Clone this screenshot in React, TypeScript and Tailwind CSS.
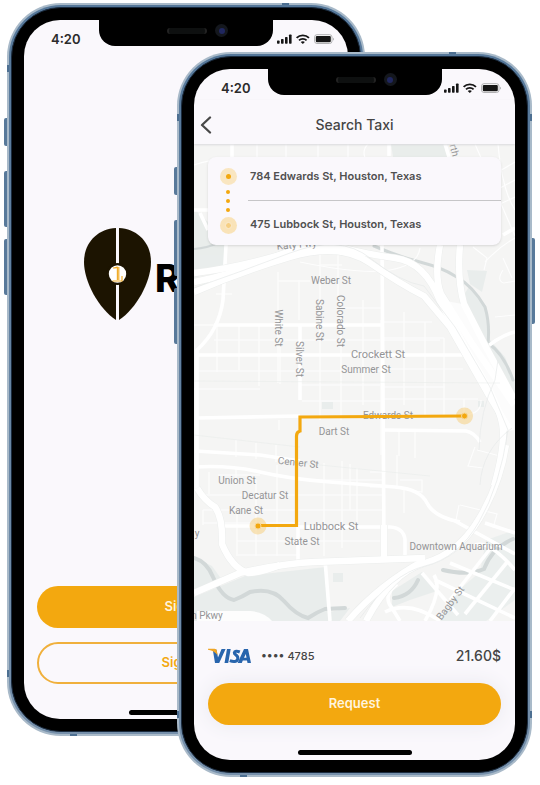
import type { ReactNode } from "react";

function StatusIcons() {
  return (
    <svg viewBox="0 0 58 12" className="h-3 w-[58px]" fill="#161616" role="img" aria-label="Signal, Wi-Fi and battery">
      <rect x="0" y="7.6" width="2.6" height="3.2" rx="0.7" />
      <rect x="4" y="6" width="2.6" height="4.8" rx="0.7" />
      <rect x="8" y="4" width="2.6" height="6.8" rx="0.7" />
      <rect x="12" y="1.6" width="2.6" height="9.2" rx="0.7" />
      <g fill="none" stroke="#161616" strokeWidth="1.8">
        <path d="M19.6 4.9 C23 1.6 28.6 1.6 32 4.9" />
        <path d="M22 7.3 C24 5.3 27.6 5.3 29.6 7.3" />
      </g>
      <path d="M25.8 11 L23.7 8.9 C24.8 8 26.8 8 27.9 8.9 Z" />
      <rect x="37.6" y="1.7" width="17.4" height="8.8" rx="2.4" fill="#fff" stroke="#a8a8aa" strokeWidth="0.9" />
      <rect x="38.8" y="2.9" width="15" height="6.4" rx="1.2" />
      <path d="M56.1 4.7 C57.3 5 57.3 7.2 56.1 7.5 Z" fill="#a8a8aa" />
    </svg>
  );
}

function StatusBar() {
  return (
    <div className="grid h-[31px] grid-cols-[1fr_174px_1fr] items-start">
      <span className="pt-[9px] pl-[27px] text-[13px] leading-5 font-semibold text-[#2b2b2b]">4:20</span>
      <div className="flex h-[26px] items-center justify-end gap-2 rounded-b-2xl bg-black pr-[45px] pb-[5px]">
        <div className="h-[6px] w-10 rounded-full border-x-2 border-[#222] bg-[#0e1010]" />
        <div className="flex size-[13px] items-center justify-center rounded-full bg-[#14171d]">
          <div className="size-[6px] rounded-full bg-[#20275f]" />
        </div>
      </div>
      <div className="flex justify-end pt-[13px] pr-[13px]">
        <StatusIcons />
      </div>
    </div>
  );
}

const side = "absolute w-[3px] bg-[#58799a]";
const mark = "absolute bg-[#4d6f91]";

function Phone({ className, label, children }: { className: string; label: string; children: ReactNode }) {
  return (
    <section aria-label={label} className={`relative rounded-[54px] bg-[#a9bac9] p-[2px] ${className}`}>
      <div className={`${side} top-[115px] -left-[3px] h-7 rounded-l-xs`} />
      <div className={`${side} top-[168px] -left-[3px] h-14 rounded-l-xs`} />
      <div className={`${side} top-[236px] -left-[3px] h-14 rounded-l-xs`} />
      <div className={`${side} top-[186px] -right-[3px] h-[86px] rounded-r-xs`} />
      <div className={`${mark} top-[62px] left-0 h-[7px] w-1`} />
      <div className={`${mark} top-[62px] right-0 h-[7px] w-1`} />
      <div className={`${mark} bottom-[59px] left-0 h-[7px] w-1`} />
      <div className={`${mark} right-0 bottom-[59px] h-[7px] w-1`} />
      <div className={`${mark} top-0 right-[76px] h-1 w-[7px]`} />
      <div className={`${mark} bottom-0 left-[63px] h-1 w-[7px]`} />
      <div className="relative rounded-[52px] bg-linear-to-b from-[#56789a] to-[#7690ab] p-[2px]">
        <div className="rounded-[50px] border border-[#1b2c40] bg-black p-3">
          <div className="overflow-hidden rounded-[36px] bg-[#faf8fc]">{children}</div>
        </div>
      </div>
    </section>
  );
}

function HomeBar() {
  return <div className="mx-auto h-[5px] w-[114px] rounded-full bg-black" />;
}

function PinLogo() {
  return (
    <svg viewBox="84 228 67 92" className="h-[92px] w-[67px]" aria-hidden="true">
      <path d="M116 228 C97 229 84 243 84 262 C84 282 99 309 116 320 Z" fill="#1c1401" />
      <path d="M119 228 C138 229 151 243 151 262 C151 282 136 309 119 320 Z" fill="#1c1401" />
      <circle cx="117.5" cy="274" r="11" fill="#1c1401" />
      <circle cx="117.5" cy="274" r="8.7" fill="#fff" />
      <path d="M113 268 Q117 268 117.4 266.8 V280 M112.5 281 H122 V276 M118.8 267 V280" fill="none" stroke="#f0ad2b" strokeWidth="1.2" />
    </svg>
  );
}

function VisaLogo() {
  return (
    <svg viewBox="0 0 43 16" className="h-4 w-[43px]" role="img" aria-label="Visa">
      <path d="M5 3 L8.4 1.5 L10 9.5 L13.6 1 H17.6 L11.2 15 H7 Z" fill="#2865ad" />
      <path d="M0 0.8 H6.4 C8.3 0.8 8.8 1.8 9.2 4.5 L9.6 7.5 C8 4.5 4.5 2.6 0 1.7 Z" fill="#efa525" />
      <path d="M19 1 H22.7 L20.2 15 H16.5 Z" fill="#2865ad" />
      <path d="M31.8 4 C29 2.800 26.6 2.900 26.3 4.700 C26.2 6.8 30.5 7 29.8 10.8 C29.2 14 25.5 14.2 21.8 12.700" fill="none" stroke="#2865ad" strokeWidth="3" />
      <path fillRule="evenodd" d="M29.6 15 L36 1 H40 L43 15 H39.5 L39 12.5 H34.8 L33.8 15 Z M36 9.8 H38.5 L37.8 6 Z" fill="#2865ad" />
    </svg>
  );
}

const minorRoads = [
  "M194 165 Q214 158 232 160", "M232 144 V160", "M257 144 V158", "M286 144 V158", "M318 144 V158", "M348 144 V158", "M365 158 Q362 150 368 144",
  "M475 144 L515 236", "M498 144 Q502 190 515 210", "M498 172 L515 162", "M500 188 L515 180", "M500 204 L515 197",
  "M320 252 V300", "M338 254 V300", "M320 265 H342", "M278 272 V383", "M299 280 V320", "M278 281 H310", "M216 294 H232", "M194 325 H218",
  "M320 300 V420", "M341 300 V420", "M363 300 V405", "M340 308 H381", "M340 325 H381", "M214 340 H440", "M217 326 V372", "M239 326 V370", "M259 326 V386", "M280 326 V384",
  "M197 371 H380", "M194 389 H260", "M300 385 H380", "M302 401 H381", "M381 320 V455", "M404 312 V405", "M425 322 V415", "M444 338 V415",
  "M384 322 H432", "M384 338 H444", "M384 369 H463", "M384 387 H445", "M384 399 H478", "M464 399 V415", "M464 415 Q482 414 481 400",
  "M279 420 V430", "M236 440 V457", "M256 443 V459", "M276 445 V462", "M399 431 V456", "M415 431 V458", "M236 469 V485",
  "M209 472 V494", "M218 475 H260", "M198 495 H300", "M203 510 H382", "M203 523 H300", "M237 541 H382", "M238 555 H300",
  "M203 510 V525", "M237 510 V556", "M256 480 V556", "M277 465 V556", "M324 463 V556", "M342 461 V548", "M357 468 V530", "M350 464 V510",
  "M300 480 H382", "M300 495 H382", "M386 472 H370 M370 487 H384", "M397 455 V488 L422 492 V480 H400", "M404 487 V513",
  "M475 447 L468 466 L483 468 M477 450 L500 456", "M460 505 L497 514 L493 528", "M459 505 L456 520",
  "M503 270 Q496 281 504 283 L515 281", "M485 262 Q500 246 515 238", "M473 247 L487 258 L484 270", "M503 258 L512 278", "M495 317 L515 315",
  "M420 248 Q418 265 390 270 T300 262",
];

const streets = [
  "M226 245 L223 300 Q219 330 197 350 V490", "M214 325 H382", "M198 355 H475", "M300 325 V400", "M198 418 L300 416",
  "M382 245 L384 545", "M195 451 L260 455 L300 461", "M195 467 Q230 465 260 472 T330 482 T395 487 T427 503 T460 522",
  "M384 430 L466 431 Q475 433 480 442", "M221 526 H262", "M298 525 V560", "M300 527 H390 Q404 528 405 540 V562", "M325 560 L330 621",
  "M194 210 H210", "M200 213 L208 230", "M481 352 Q500 335 515 332", "M485 523 L515 533", "M455 521 L515 554",
  "M422 573 L458 615", "M435 580 L515 618", "M450 563 L515 590", "M450 600 L490 549", "M465 614 L508 561", "M490 621 L515 588",
  "M475 545 Q489 540 515 570", "M397 584 Q382 596 392 608 L400 621", "M385 612 Q410 600 440 621",
  "M232 144 V160", "M389 144 V156", "M445 144 L449 157", "M503 235 L515 228", "M434 575 Q443 590 425 621",
];

const highways = [
  "M194 282 Q235 274 275 257 T340 247 T395 258 T440 301 L474 363 Q502 409 503 430 T494 486",
  "M194 292 Q240 272 290 257 T370 263 T424 296 L450 327 L487 392 L510 430",
  "M194 273 Q245 267 310 246",
  "M440 245 Q434 277 441 294 L471 342 L514 405",
  "M460 245 Q457 279 464 304 L487 349 L514 399",
  "M506 445 Q500 484 479 519 T425 563 T366 621",
  "M194 593 L240 573 Q285 563 315 562 L425 558",
  "M425 560 Q380 584 348 621",
  "M197 488 Q204 500 215 507 Q223 518 222 544 Q232 568 248 573 Q260 573 280 565",
  "M384 525 V560",
];

type MapLabel = { text: string; x: number; y: number; big?: boolean; turn?: number };

const labels: MapLabel[] = [
  { text: "Weber St", x: 331, y: 284 },
  { text: "Crockett St", x: 378, y: 358, big: true },
  { text: "Summer St", x: 366, y: 373 },
  { text: "Edwards St", x: 388, y: 419 },
  { text: "Dart St", x: 334, y: 435 },
  { text: "Center St", x: 298, y: 466, turn: 6 },
  { text: "Union St", x: 237, y: 484 },
  { text: "Decatur St", x: 265, y: 499 },
  { text: "Kane St", x: 246, y: 514 },
  { text: "Lubbock St", x: 331, y: 530, big: true },
  { text: "State St", x: 302, y: 545 },
  { text: "Downtown Aquarium", x: 456, y: 550 },
  { text: "n Pkwy", x: 207, y: 619 },
  { text: "y", x: 197, y: 537 },
  { text: "Bagby St", x: 453, y: 605, turn: -53 },
  { text: "White St", x: 275, y: 328, turn: 90 },
  { text: "Silver St", x: 296, y: 359, turn: 90 },
  { text: "Sabine St", x: 316, y: 320, turn: 90 },
  { text: "Colorado St", x: 337, y: 321, turn: 90 },
  { text: "rth", x: 451, y: 151, turn: 75 },
  { text: "Katy Fwy", x: 297, y: 248, turn: -5 },
];

function CityMap() {
  return (
    <svg
      viewBox="194 144 321 477"
      preserveAspectRatio="xMidYMid slice"
      className="h-[477px] w-full [grid-area:1/1]"
      role="img"
      aria-label="Route from Edwards St to Lubbock St"
    >
      <rect x="0" y="0" width="900" height="900" fill="#f5f5f4" />
      <g fill="#e9edec">
        <path d="M391 144 H445 L449 157 H393 Z" />
        <path d="M194 209 L208 222 L226 245 L224 268 L194 278 Z" />
        <path d="M470 285 L486 306 L490 340 L505 357 L515 382 V400 L478 340 L462 298 Z" />
        <path d="M467 270 L487 271 L482 292 L470 284 Z" />
        <path d="M322 402 H333 V409 H322 Z M478 401 H484 V407 H478 Z M333 573 H343 V582 H333 Z" />
        <path d="M194 557 L212 566 L222 580 L194 592 Z" />
        <path d="M194 597 L245 576 L326 567 L329 612 L350 608 L340 621 H194 Z" />
        <path d="M392 591 L422 572 L440 590 L410 600 L392 607 Z" />
        <path d="M486 540 L515 530 V600 L486 621 H440 L452 596 L480 572 Z" opacity="0.8" />
      </g>
      <g fill="none" stroke="#d2d8d8" strokeLinecap="round">
        <path strokeWidth="3" d="M374 246 Q397 256 420 262 T455 276 Q473 286 485 307 Q490 324 488 343 Q504 354 513 380" />
        <path strokeWidth="4" d="M194 558 Q207 562 213 577 Q222 598 234 600 Q242 597 250 592 Q272 587 284 601 T308 618 Q317 612 325 609 L345 608" />
        <path strokeWidth="4" d="M394 598 Q411 596 418 580 M443 570 Q468 576 484 569 Q492 548 513 539" />
        <path strokeWidth="2" d="M194 249 Q208 248 220 242" />
      </g>
      <g fill="none" stroke="#fff" strokeWidth="1.2" opacity="0.85">
        {minorRoads.map((d, i) => <path key={i} d={d} />)}
      </g>
      <g fill="none" stroke="#fff" strokeWidth="3.6" strokeLinejoin="round">
        {streets.map((d, i) => <path key={i} d={d} />)}
      </g>
      <g fill="none" stroke="#eceeed" strokeWidth="7.4" strokeLinejoin="round">
        {highways.map((d, i) => <path key={i} d={d} />)}
      </g>
      <path d="M441 300 L462 304 L486 349 L514 400 V430 L504 432 Q500 405 474 363 Z" fill="#fcfcfc" />
      <g fill="none" stroke="#fff" strokeWidth="6.4" strokeLinejoin="round">
        {highways.map((d, i) => <path key={i} d={d} />)}
      </g>
      <g fill="none" stroke="#e6eae9" strokeWidth="0.7">
        <path d="M194 288 Q240 272 290 253 T370 258 T424 286 L455 327 L490 387 L508 430" />
        <path d="M508 430 Q500 486 479 522 T425 566 T360 618" />
        <path d="M479 450 Q480 410 495 380 L498 360 M480 485 Q482 450 512 428" />
        <path d="M194 435 L300 447 M300 463 L430 476 M194 381 L500 383" opacity="0.7" />
      </g>
      <path d="M197 611 H250 Q264 612 272 621 H197 Z" fill="#fdfdfd" />
      <g fill="#949496" textAnchor="middle" className="font-['Roboto',sans-serif] text-[10px]">
        {labels.map((l) => (
          <text
            key={l.text}
            x={l.x}
            y={l.y}
            className={l.big ? "text-[11px]" : undefined}
            transform={l.turn ? `rotate(${l.turn} ${l.x} ${l.y})` : undefined}
          >
            {l.text}
          </text>
        ))}
      </g>
      <g fill="#f5cf82" opacity="0.55">
        <circle cx="464.5" cy="416" r="8.5" />
        <circle cx="258" cy="526" r="8.5" />
      </g>
      <path
        d="M464 416 L300 417 V431 Q296.5 432 296.5 436 L296.5 525.5 H258"
        fill="none" stroke="#f3a80f" strokeWidth="3.2"
      />
      <g fill="#f3a80f" stroke="#f7d795" strokeWidth="1">
        <circle cx="464.5" cy="416" r="3" />
        <circle cx="258" cy="526" r="3" />
      </g>
    </svg>
  );
}

function TripCard() {
  return (
    <div className="mx-[14px] mt-[13px] flex h-[88px] self-start rounded-lg bg-[#faf8fc] shadow-sm [grid-area:1/1]">
      <div className="flex w-10 flex-col items-center justify-between py-[11px]" aria-hidden="true">
        <div className="flex size-[17px] items-center justify-center rounded-full bg-[#f9e6c1]">
          <div className="size-[5px] rounded-full bg-[#f3a80f]" />
        </div>
        <div className="flex flex-col gap-[5px]">
          <div className="size-1 rounded-full bg-[#f3a80f]" />
          <div className="size-1 rounded-full bg-[#f3a80f]" />
          <div className="size-1 rounded-full bg-[#f3a80f]" />
        </div>
        <div className="flex size-[17px] items-center justify-center rounded-full bg-[#f9e3b8]">
          <div className="size-[7px] rounded-full border border-[#fbecd0] bg-[#f6cf83]" />
        </div>
      </div>
      <div className="flex flex-1 flex-col text-[11px] font-semibold text-[#505050]">
        <p className="flex h-11 items-center border-b border-[#c6c6c8] pb-1 pl-[2px]">784 Edwards St, Houston, Texas</p>
        <p className="flex h-11 items-center pt-[2px] pl-[2px]">475 Lubbock St, Houston, Texas</p>
      </div>
    </div>
  );
}

export default function App() {
  return (
    <main className="grid grid-cols-[170px_minmax(187px,1fr)_167px] items-start overflow-hidden bg-white pt-[3px] pr-2 pb-2 pl-[7px] font-['Inter','Liberation_Sans',sans-serif]">
      <Phone label="Welcome" className="col-span-2 col-start-1 row-start-1">
        <StatusBar />
        <div className="flex items-center gap-1 pt-[177px] pl-[60px]">
          <PinLogo />
          <span className="pt-2 text-[38px] leading-10 font-extrabold text-black">R</span>
        </div>
        <div className="mt-[266px] mb-[26px] flex flex-col gap-[14px] px-[13px] text-[13px] font-semibold">
          <button type="button" className="h-[42px] rounded-full bg-[#f3a80f] text-[#fff4de]">Sign In</button>
          <button type="button" className="h-[42px] rounded-full border-2 border-[#f0b03c] text-[#f3a80f]">Sign Up</button>
        </div>
        <HomeBar />
        <div className="h-1" />
      </Phone>

      <Phone label="Search Taxi" className="z-10 col-span-2 col-start-2 row-start-1 mt-[49px]">
        <StatusBar />
        <header className="relative z-10 grid h-11 grid-cols-[28px_1fr_28px] items-center pt-[5px] shadow-[0_1px_2px_#d9d9dc]">
          <button type="button" aria-label="Back" className="flex justify-center pr-1">
            <svg viewBox="0 0 12 18" className="h-[18px] w-3" fill="none" stroke="#484848" strokeWidth="2.3" strokeLinecap="round" strokeLinejoin="round">
              <path d="M10 1.5 L2 9 L10 16.5" />
            </svg>
          </button>
          <h1 className="text-center text-sm font-medium text-[#454545]">Search Taxi</h1>
        </header>
        <div className="grid">
          <CityMap />
          <TripCard />
        </div>
        <div className="px-[14px]">
          <div className="flex h-[62px] items-center pt-2 text-[#454545]">
            <VisaLogo />
            <span className="flex-1 pl-[10px] text-[11px] font-medium">•••• 4785</span>
            <span className="text-sm font-medium">21.60$</span>
          </div>
          <button type="button" className="h-[42px] w-full rounded-full bg-[#f3a80f] text-[13px] font-semibold text-[#fff4de] shadow-[0_0_20px_#e9e8ef]">
            Request
          </button>
        </div>
        <div className="h-[25px]" />
        <HomeBar />
        <div className="h-[5px]" />
      </Phone>
    </main>
  );
}
